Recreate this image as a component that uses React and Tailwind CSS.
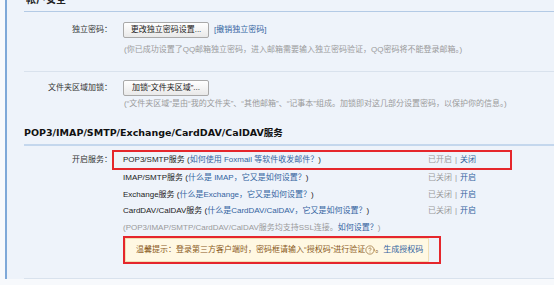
import { CircleHelp } from 'lucide-react';

const link = 'text-[#33639f]';
const gray = 'text-[#9a9a9a]';

function Btn({ children }) {
  return (
    <button className="h-[16px] w-[86px] rounded-[2px] border border-[#a9a9a9] bg-gradient-to-b from-white to-[#e9e9e9] text-[8px] leading-[14px] text-[#222]">
      {children}
    </button>
  );
}

function Service({ name, tip, on, boxed }) {
  return (
    <div
      className={
        'flex items-center pl-[9px] ' +
        (boxed
          ? 'h-[20px] w-[400px] border-2 border-[#e5262c]'
          : 'h-[16.5px] w-[400px] border-x-2 border-transparent')
      }
    >
      <div className="w-[305px] text-[#222]">
        {name} (<span className={link}>{tip}</span>)
      </div>
      <div className="flex gap-[3px]">
        <span className={gray}>{on ? '已开启' : '已关闭'}</span>
        <span className={gray}>|</span>
        <span className={link}>{on ? '关闭' : '开启'}</span>
      </div>
    </div>
  );
}

export default function App() {
  return (
    <div className="h-[285px] w-[554px] overflow-hidden bg-[#f7f9fc] font-['Liberation_Sans','Noto_Sans_CJK_SC',sans-serif] text-[8px] leading-[12px] text-[#333]">
      <div className="ml-[5px] h-full border-l-2 border-[#7ea8d8] bg-[#eef3fa] pl-[17px]">
        <div className="-mt-[6px] h-[18px] border-b border-[#b3cae5] pl-[2px] text-[10px] font-bold leading-[12px] text-[#222]">
          帐户安全
        </div>

        <div className="border-b border-[#d9e2ed] pb-[15px]">
          <div className="mt-[10px] flex items-center">
            <div className="w-[88px] text-right">独立密码：</div>
            <div className="ml-[11px] flex items-center gap-[5px]">
              <Btn>更改独立密码设置...</Btn>
              <span className={link}>[撤销独立密码]</span>
            </div>
          </div>
          <div className={'mt-[6px] pl-[100px] ' + gray}>
            (你已成功设置了QQ邮箱独立密码，进入邮箱需要输入独立密码验证，QQ密码将不能登录邮箱。)
          </div>
        </div>

        <div className="mt-[8px] flex items-center">
          <div className="w-[88px] text-right">文件夹区域加锁：</div>
          <div className="ml-[11px]">
            <Btn>加锁“文件夹区域”...</Btn>
          </div>
        </div>
        <div className={'mt-[2px] pl-[100px] ' + gray}>
          (“文件夹区域”是由“我的文件夹”、“其他邮箱”、“记事本”组成。加锁即对这几部分设置密码，以保护你的信息。)
        </div>

        <div className="mt-[17px] border-b-2 border-[#c4d7ed] pb-[5px] font-['DejaVu_Sans','Noto_Sans_CJK_SC',sans-serif] text-[9.5px] font-bold leading-[12px] text-[#111]">
          POP3/IMAP/SMTP/Exchange/CardDAV/CalDAV服务
        </div>

        <div className="border-b border-[#d9e2ed] pb-[14px]">
          <div className="mt-[4px] flex">
            <div className="w-[88px] pt-[4px] text-right">开启服务：</div>
            <div>
              <Service boxed on name="POP3/SMTP服务" tip="如何使用 Foxmail 等软件收发邮件？" />
              <Service name="IMAP/SMTP服务" tip="什么是 IMAP，它又是如何设置？" />
              <Service name="Exchange服务" tip="什么是Exchange，它又是如何设置？" />
              <Service name="CardDAV/CalDAV服务" tip="什么是CardDAV/CalDAV，它又是如何设置？" />
              <div className={'flex h-[16.5px] items-center pl-[11px] ' + gray}>
                (POP3/IMAP/SMTP/CardDAV/CalDAV服务均支持SSL连接。
                <span className={link}>如何设置？</span>)
              </div>
              <div className="ml-[11px] w-[318px] border-2 border-[#e5262c]">
                <div className="flex h-[24px] w-[304px] items-center border border-[#f1dfb4] bg-[#fff8e3] pl-[10px] text-[#8a5a1c]">
                  温馨提示：登录第三方客户端时，密码框请输入“授权码”进行验证
                  <CircleHelp size={10} strokeWidth={1.5} />
                  。<span className={link}>生成授权码</span>
                </div>
              </div>
            </div>
          </div>
        </div>
      </div>
    </div>
  );
}
